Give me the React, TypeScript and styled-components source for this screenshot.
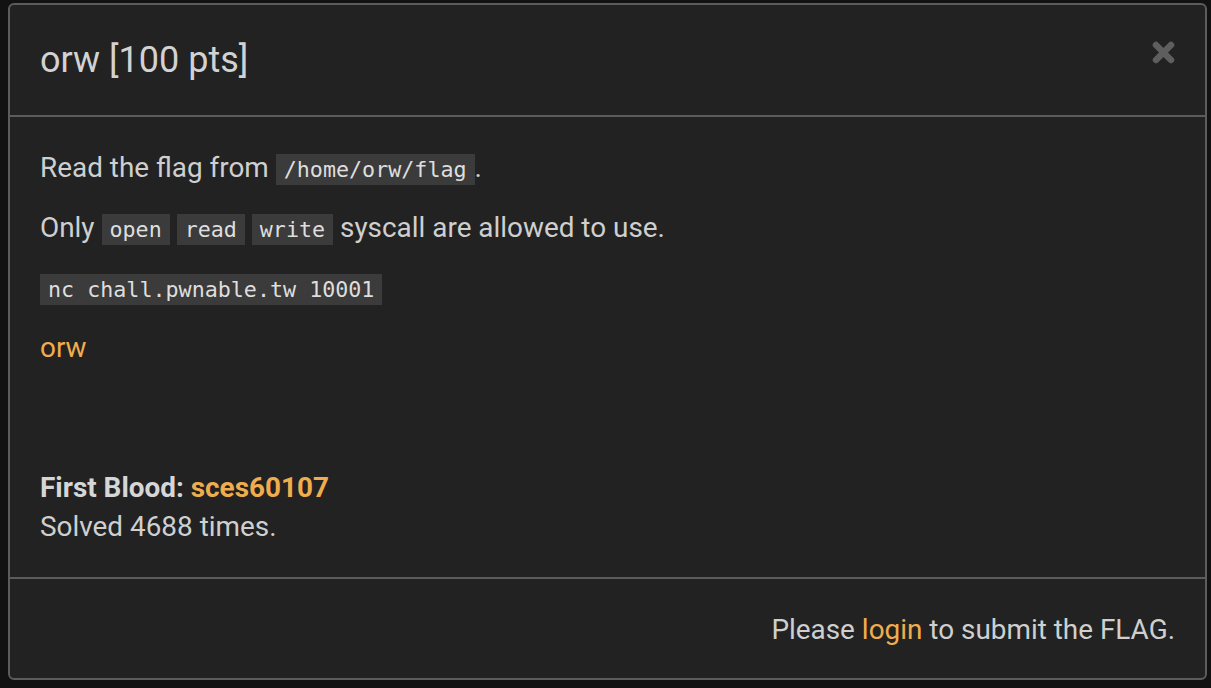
import React from 'react';
import styled, { createGlobalStyle } from 'styled-components';

const GlobalStyle = createGlobalStyle`
    html, body {
        margin: 0;
        padding: 0;
        background: #121212;
    }
    body {
        font-family: Roboto, 'Liberation Sans', sans-serif;
    }
`;

const Backdrop = styled.div`
    width: 1211px;
    height: 688px;
    padding: 3px 4px 0 8px;
    box-sizing: border-box;
    background: #121212;
`;

const Modal = styled.div`
    display: flex;
    flex-direction: column;
    width: 1199px;
    height: 677px;
    box-sizing: border-box;
    background: #222;
    border: 2px solid #5c5c5c;
    border-radius: 6px;
    color: #cfcfcf;
`;

const Header = styled.div`
    display: flex;
    align-items: flex-start;
    justify-content: space-between;
    padding: 30px 30px 30px 30px;
    border-bottom: 2px solid #5c5c5c;
`;

const Title = styled.h4`
    margin: 0;
    font-size: 36px;
    font-weight: 400;
    line-height: 50px;
    color: #d2d2d2;
`;

const Close = styled.button`
    display: flex;
    padding: 0;
    margin-top: 6px;
    border: 0;
    background: none;
    cursor: pointer;
`;

const Body = styled.div`
    flex: 1;
    padding: 31px 30px 0;
    font-size: 27.9px;
    line-height: 39px;
`;

const Para = styled.p`
    margin: 0 0 21px;
`;

const Code = styled.code`
    font-family: 'DejaVu Sans Mono', 'Liberation Mono', monospace;
    font-size: 21.7px;
    line-height: 0;
    padding: 3px 8px;
    background: #3b3b3b;
    color: #dedede;
`;

const Link = styled.a<{ $bold?: boolean }>`
    color: #f0ad4e;
    text-decoration: none;
    font-weight: ${(p) => (p.$bold ? 700 : 400)};
`;

const Spacer = styled.div`
    height: 80px;
`;

const Stat = styled.div`
    line-height: 39px;
    b {
        color: #d6d6d6;
    }
`;

const Footer = styled.div`
    padding: 31px 30px 29px;
    border-top: 2px solid #5c5c5c;
    text-align: right;
    font-size: 27.9px;
    line-height: 39px;
`;

const CloseIcon = () => (
    <svg width="23" height="23" viewBox="0 0 23 23">
        <path
            d="M4 4 L19 19 M19 4 L4 19"
            stroke="#5e5e5e"
            strokeWidth="6.5"
            strokeLinecap="round"
        />
    </svg>
);

const App = () => {
    return (
        <Backdrop>
            <GlobalStyle />
            <Modal>
                <Header>
                    <Title>orw [100 pts]</Title>
                    <Close aria-label="close">
                        <CloseIcon />
                    </Close>
                </Header>
                <Body>
                    <Para>
                        Read the flag from <Code>/home/orw/flag</Code>.
                    </Para>
                    <Para>
                        Only <Code>open</Code> <Code>read</Code>{' '}
                        <Code>write</Code> syscall are allowed to use.
                    </Para>
                    <Para>
                        <Code>nc chall.pwnable.tw 10001</Code>
                    </Para>
                    <Para>
                        <Link href="#">orw</Link>
                    </Para>
                    <Spacer />
                    <Stat>
                        <b>First Blood: </b>
                        <Link href="#" $bold>
                            sces60107
                        </Link>
                    </Stat>
                    <Stat>Solved 4688 times.</Stat>
                </Body>
                <Footer>
                    Please <Link href="#">login</Link> to submit the FLAG.
                </Footer>
            </Modal>
        </Backdrop>
    );
};

export default App;
